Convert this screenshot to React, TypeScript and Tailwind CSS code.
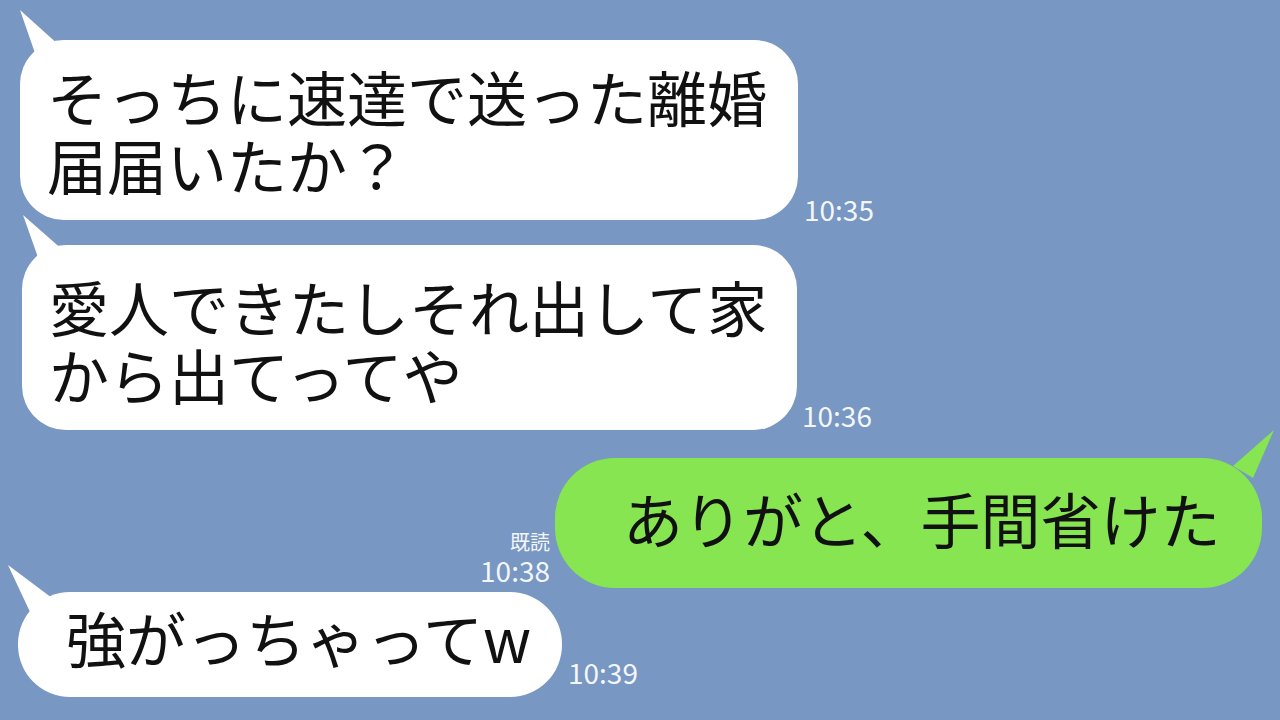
import type { ReactNode } from "react";

const font = { fontFamily: '"Noto Sans CJK JP", "Noto Sans", sans-serif' };

// tail drawn from the bubble's top corner; points are offsets from that corner
function Tail({ points, fill, side }: { points: string; fill: string; side: "left" | "right" }) {
  return (
    <svg
      width={1}
      height={1}
      className={side === "left" ? "absolute left-0 top-0 overflow-visible" : "absolute right-0 top-0 overflow-visible"}
    >
      <polygon points={points} fill={fill} />
    </svg>
  );
}

function Time({ children }: { children: ReactNode }) {
  return <div className="text-[28px] leading-[28px] text-[#f3f6fa]">{children}</div>;
}

export default function App() {
  return (
    <div className="w-[1280px] h-[720px] overflow-hidden bg-[#7897c2] flex flex-col" style={font}>
      <div className="flex items-end mt-[40px] ml-[20px]">
        <div className="relative w-[778px] h-[180px] rounded-[44px] bg-white pl-[27px] pt-[22px] text-[60px] leading-[68px] text-[#111] whitespace-nowrap">
          <Tail side="left" fill="#ffffff" points="0,-30 40,6 16,16" />
          そっちに速達で送った離婚
          <br />
          届届いたか？
        </div>
        <div className="ml-[6px] mb-[-3px]">
          <Time>10:35</Time>
        </div>
      </div>

      <div className="flex items-end mt-[25px] ml-[22px]">
        <div className="relative w-[775px] h-[185px] rounded-[44px] bg-white pl-[27px] pt-[27px] text-[60px] leading-[68px] text-[#111] whitespace-nowrap">
          <Tail side="left" fill="#ffffff" points="1,-30 42,6 18,18" />
          愛人できたしそれ出して家
          <br />
          から出てってや
        </div>
        <div className="ml-[5px] mb-[1px]">
          <Time>10:36</Time>
        </div>
      </div>

      <div className="flex items-end justify-end mt-[28px] mr-[18px]">
        <div className="flex flex-col items-end mr-[5px] mb-[4px]">
          <div className="text-[20px] leading-[28px] text-[#f3f6fa]">既読</div>
          <Time>10:38</Time>
        </div>
        <div className="relative w-[707px] h-[130px] rounded-[60px] bg-[#86e550] pl-[68px] pb-[10px] flex items-center text-[60px] leading-[68px] text-[#111] whitespace-nowrap">
          <Tail side="right" fill="#86e550" points="13,-28 -28,8 -8,20" />
          ありがと、手間省けた
        </div>
      </div>

      <div className="flex items-end mt-[4px] ml-[18px]">
        <div className="relative w-[544px] h-[105px] rounded-[52px] bg-white pl-[48px] pb-[16px] flex items-center text-[60px] leading-[68px] text-[#111] whitespace-nowrap">
          <Tail side="left" fill="#ffffff" points="-10,-27 34,6 12,20" />
          強がっちゃってw
        </div>
        <div className="ml-[6px] mb-[11px]">
          <Time>10:39</Time>
        </div>
      </div>
    </div>
  );
}
